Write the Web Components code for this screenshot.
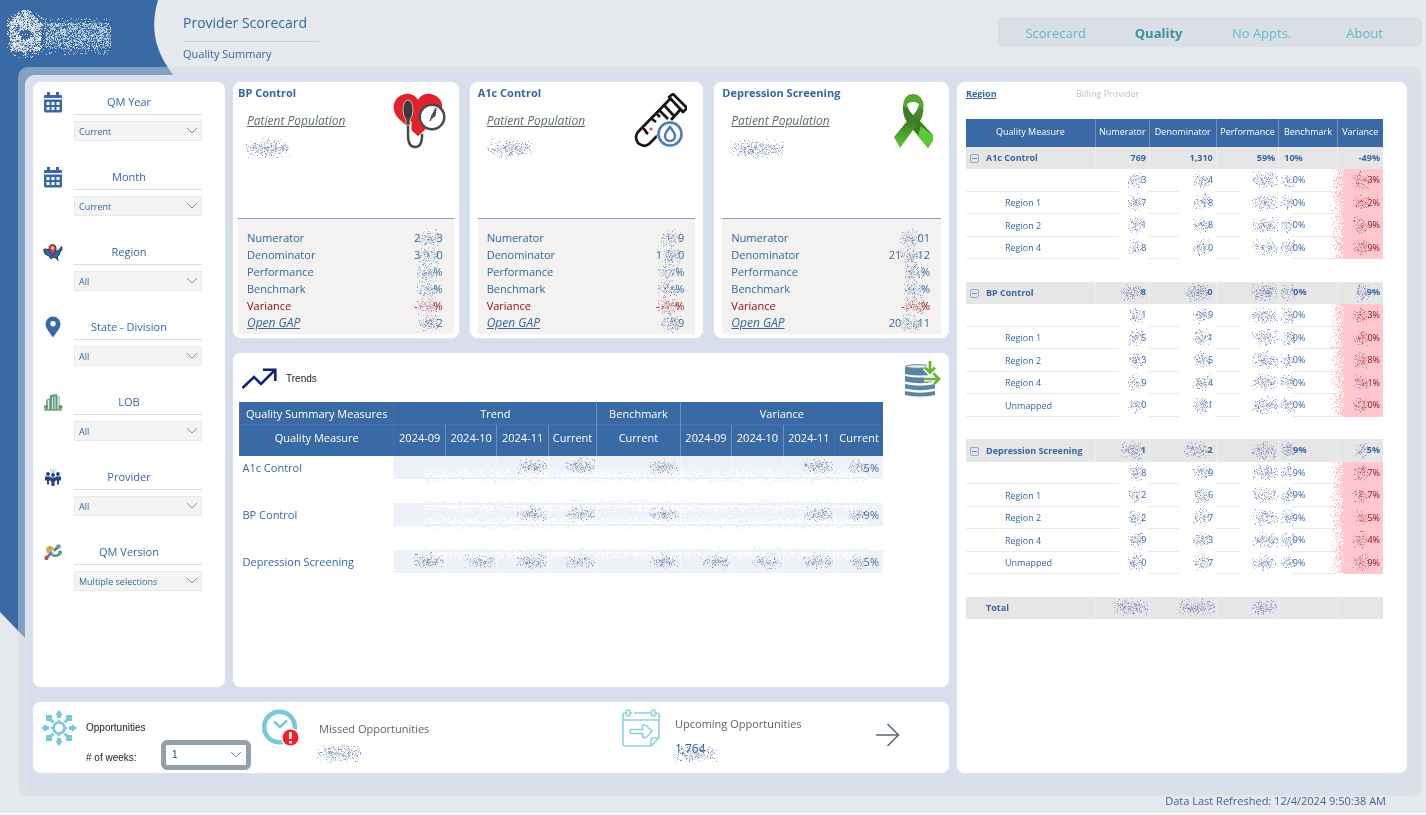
<!DOCTYPE html>
<html lang="en">
<head>
<meta charset="utf-8">
<title>Provider Scorecard</title>
<style>
  body { margin: 0; background: #e6e9ee; font-family: "Open Sans", "Noto Sans", sans-serif; font-size: 11px; color: #3567a5; }
</style>
</head>
<body>
<score-page></score-page>
<script>
/* ---------- helpers ---------- */
function define(name, html, setup) {
  const t = document.createElement('template');
  t.innerHTML = html;
  customElements.define(name, class extends HTMLElement {
    connectedCallback() {
      if (this.shadowRoot) return;
      const root = this.attachShadow({ mode: 'open' });
      root.append(t.content.cloneNode(true));
      if (setup) setup(this, root);
    }
  });
}
function rng(seed) {
  let s = seed * 2654435761 >>> 0 || 1;
  return () => { s ^= s << 13; s >>>= 0; s ^= s >>> 17; s ^= s << 5; s >>>= 0; return s / 4294967296; };
}
let seedCounter = 7;

/* ---------- noise-patch: speckle that hides private values ---------- */
define('noise-patch', `<style>
  :host { display: inline-block; vertical-align: middle; line-height: 0; pointer-events: none; }
  canvas { display: block; }
</style><canvas aria-hidden="true"></canvas>`, (el, root) => {
  const w = +el.getAttribute('w') || 20, h = +el.getAttribute('h') || 16;
  const mode = el.getAttribute('mode') || 'value';
  const c = root.querySelector('canvas');
  c.width = w; c.height = h;
  const g = c.getContext('2d'), r = rng(seedCounter += 13);
  for (let i = 0; i < 8; i++) r();
  const sets = {
    value: ['57,100,165', '110,140,190', '57,80,140', '190,170,190', '150,180,220'],
    red: ['150,20,40', '190,90,100', '160,110,160', '220,120,110'],
    purple: ['57,100,165', '90,90,160', '150,150,200', '190,170,190']
  };
  const dot = (x, y, col, a) => { g.fillStyle = 'rgba(' + col + ',' + a + ')'; g.fillRect(x, y, 1, 1); };
  for (let y = 0; y < h; y++) for (let x = 0; x < w; x++) {
    const v = r();
    if (mode === 'logo') {
      const dx = x - 18, dy = y - 26, d = Math.hypot(dx, dy);
      const roof = y > 1 && y < 18 && Math.abs(dx) < y * 0.95 + 2;
      const body = y >= 14 && y < 43 && Math.abs(dx) < 16;
      let p = (body && d > 6) || roof ? 0.74 : d < 24 ? 0.2 : 0;
      if (d < 5) p = 0.12;
      if (x > 37 && x < w - 4) p = Math.max(p, y > 14 && y < 31 ? 0.6 : y > 30 && y < 41 ? 0.5 : y > 9 && y < 47 ? 0.12 : 0);
      if (v < p) dot(x, y, '255,255,255', x > 37 ? 0.35 + r() * 0.45 : 0.5 + r() * 0.5);
    } else if (mode === 'fringe') {
      const e = Math.min(y, h - 1 - y);
      if (e < 9) { if (v < e / 9 * 0.85 + 0.03) dot(x, y, '255,255,255', 0.85); }
      else if (v < (15 - e) / 6 * 0.45) dot(x, y, '232,238,246', 0.9);
    } else if (mode === 'edge') {
      if (v < Math.pow(x / w, 1.2)) dot(x, y, '255,199,206', 1);
    } else {
      const nx = (x - w / 2) / (w / 2), ny = (y - h / 2) / (h / 2);
      const p = 0.8 * Math.exp(-(nx * nx + ny * ny * 2)) - 0.06;
      const s = sets[mode];
      if (v < p) dot(x, y, s[Math.floor(r() * s.length)], 0.2 + r() * 0.55);
    }
  }
});

/* expands "2~3" into visible digits around a speckled patch */
function masked(text, mode, w, h) {
  return text.replace('~', `<noise-patch w="${w}" h="${h || 16}" mode="${mode}"></noise-patch>`);
}

/* ---------- icons ---------- */
const ICONS = {
  calendar: `<svg viewBox="0 0 20 22"><path fill="#3968a6" d="M4 1h3v3h6V1h3v3h2q1 0 1 1v2H1V5q0-1 1-1h2zM1 8.500h18V20q0 1.500-1.500 1.500h-15Q1 21.500 1 20z"/><path fill="#fff" d="M3.500 11h3v3h-3zm5 0h3v3h-3zm5 0h3v3h-3zm-10 5h3v3h-3zm5 0h3v3h-3zm5 0h3v3h-3z"/></svg>`,
  region: `<svg viewBox="0 0 20 22"><path d="M1 8l5 .5 4 .5 4 1 2-1 2.500-3.500.5 3-1.500 2-1.500 3.500-2 2 1 3.500-2-2.500-3-1-2 2-2-3-4-2-1-3z" fill="#2f66ab" stroke="#23324a" stroke-width="1"/><path d="M9.500 14.500C7.500 11.500 6 10 6 7a3.500 3.500 0 017 0C13 10 11.500 11.500 9.500 14.500z" fill="#e0404b" stroke="#3b2430" stroke-width=".8"/><circle cx="9.500" cy="7" r="1.500" fill="#f6d5d5"/></svg>`,
  pin: `<svg viewBox="0 0 20 22"><path fill="#3968a6" fill-rule="evenodd" d="M10 21.500C7 16.500 2.500 12.500 2.500 8a7.500 7.500 0 0115 0c0 4.500-4.500 8.500-7.500 13.500zM10 5a2.700 2.700 0 100 5.400A2.700 2.700 0 0010 5z"/></svg>`,
  building: `<svg viewBox="0 0 20 22"><path fill="#7fae9b" d="M3 9l5-3v13H3z"/><path fill="#5d9c93" d="M7 4l7-1v16H7z"/><path fill="#9cc3b4" d="M14 4l3 2v13h-3z"/><path d="M9.500 6v12M12 5.500V18M5.500 9v9M15.500 7v10" stroke="#dcefe6" stroke-width="1"/><circle cx="3" cy="16" r="2" fill="#5f9a62"/><circle cx="17.500" cy="16" r="2" fill="#5f9a62"/><path d="M1 19h18" stroke="#7aa377" stroke-width="1.500"/></svg>`,
  people: `<svg viewBox="0 0 20 22"><g fill="#26417f"><circle cx="5" cy="8" r="1.900"/><circle cx="15" cy="8" r="1.900"/><circle cx="10" cy="9" r="1.900"/><path d="M2 10.500h5.500v4H6v4H4v-4H2zM12.500 10.500H18v4h-2v4h-2v-4h-1.500zM7.500 11.500h5v4h-1V20h-3v-4.500h-1z"/></g><path d="M7 4h1.500m1 0h1.500m1 0h1.500M8.500 6h3" stroke="#8ec9ec" stroke-width="1.300"/></svg>`,
  version: `<svg viewBox="0 0 20 22"><path d="M3 8q2-4 5-3l3 2-4 5H4z" fill="#d5a84c"/><path d="M9 14q4 2 8-1" stroke="#3fa277" stroke-width="2.500" fill="none"/><path d="M4 16L15 6" stroke="#5b7d9d" stroke-width="3"/><circle cx="15.500" cy="5.500" r="2.300" fill="#7595ae"/><circle cx="17" cy="11.500" r="2" fill="#3fa277"/><circle cx="3.500" cy="17" r="2.200" fill="#b65a4c"/><circle cx="10" cy="10.500" r="1.500" fill="#e9eef2"/></svg>`,
  heart: `<svg viewBox="0 0 54 56"><path fill="#e3202b" d="M26 43L7 26C-3 16 2 3 13 1c6-1 11 2 13 6 2-4 7-7 13-6 10 2 15 12 8 23z"/><path d="M17 28v14q0 11 7 11t7-11" fill="none" stroke="#fff" stroke-width="5"/><path d="M16 25v17q0 12 7 12t7-11v-2" fill="none" stroke="#4a4a4a" stroke-width="2.500"/><path d="M11 17q0-9 5-10 5 1 5 10 0 6-3 10v5h-4v-5q-3-4-3-10z" fill="#3b3b3b" stroke="#c8b8b8" stroke-width="1"/><circle cx="40" cy="24" r="12.300" fill="#fff" stroke="#4a4a4a" stroke-width="2.500"/><path d="M38 28l2-6 4-7-1 8-4 3z" fill="#555" stroke="#444" stroke-width="1"/></svg>`,
  tube: `<svg viewBox="0 0 54 56"><g fill="none" stroke="#141414" stroke-width="2.700" stroke-linejoin="round"><path d="M36 4l4-3 14 14-4 4z"/><path d="M37 6L5 39q-4 5 0 11 6 5 11 1l12-12M47 17l-9 10M31 12l10 11M26 17l9 9"/><path d="M24 21l3 3m-8 2l4 3m-13 7q2 0 3 3l2 2"/></g><circle cx="18" cy="36" r="1.500" fill="#ee4050"/><circle cx="37" cy="41" r="13.500" fill="#fff"/><circle cx="37" cy="41" r="11.500" fill="#fff" stroke="#4a7ab8" stroke-width="2.500"/><path d="M37 34q-5 6-5 9a5 5 0 0010 0q0-3-5-9z" fill="none" stroke="#4a7ab8" stroke-width="2.500"/></svg>`,
  ribbon: `<svg viewBox="-7 0 54 56"><defs><linearGradient id="ga" x1="0" y1="0" x2="0" y2="1"><stop offset="0" stop-color="#4d9a2c"/><stop offset=".4" stop-color="#3f7d22"/><stop offset="1" stop-color="#5cc838"/></linearGradient></defs><path fill="#3f7a24" d="M17 13Q16 24 24 33L42 55l7-11L32 26Q26 19 27 10z"/><path fill="url(#ga)" d="M37 13Q39 24 30 33L14 55 8 44 22 27Q30 18 29 10z"/><path fill="#54aa33" d="M17 13Q18 1 27 1t11 12l-5 2q-1-6-6-6t-6 6z"/><path fill="#fff" d="M21 11q6-4 12 0-1 6-6 11-5-5-6-11z"/><path fill="#5cc838" d="M35 33l14 11-7 11-10-12z"/></svg>`,
  trend: `<svg viewBox="0 0 36 22"><path d="M1.500 20L13 9l7 7L33 3" fill="none" stroke="#10237a" stroke-width="2.600"/><path d="M22 1.700h12.300V13" fill="none" stroke="#10237a" stroke-width="2.600"/></svg>`,
  database: `<svg viewBox="0 0 38 38"><g fill="#5b86a0"><path d="M1 7h30v7Q16 17 1 14z"/><path d="M1 16q15 3 30 0v5.500Q16 25 1 21.500z"/><path d="M1 24q15 3.500 30 0v4.500q-15 3.500-30 0z"/><path d="M1 31q15 3.500 30 0v4q-15 3-30 0z"/></g><ellipse cx="14" cy="6.500" rx="12.500" ry="1.800" fill="#e9eff2" stroke="#5b86a0"/><path d="M26 1v10m-5-3.500l5 5 5-5" stroke="#fff" stroke-width="5.500" fill="none"/><path d="M20 19h14m-4.500-4.500L35 19l-5.500 4.500" stroke="#fff" stroke-width="5" fill="none"/><path d="M26 1v11m-5-4.500l5 5 5-5M20 19h15m-5-5l5 5-5 5" stroke="#6ab52d" stroke-width="2.700" fill="none"/></svg>`,
  hub: `<svg viewBox="0 0 36 38"><g fill="#79c9db"><path d="M18 1l4 5h-2v3h-4V6h-2zM18 37l4-5h-2v-3h-4v3h-2zM0 19l5-4v2h3v4H5v2zM36 19l-5-4v2h-3v4h3v2z"/><path d="M5 6h6v4l2.500 2.500-2 2L9 12H5zM31 6h-6v4l-2.500 2.500 2 2L27 12h4zM5 32h6v-4l2.500-2.500-2-2L9 26H5zM31 32h-6v-4l-2.500-2.500 2-2L27 26h4z"/><path d="M17 10.500h2v3h-2zM17 24.500h2v3h-2zM9.500 18h3v2h-3zM23.500 18h3v2h-3z"/></g><circle cx="18" cy="19" r="5.500" fill="#fff" stroke="#79c9db" stroke-width="2.600"/></svg>`,
  clock: `<svg viewBox="0 0 38 38"><circle cx="17.500" cy="18" r="15.300" fill="#fff" stroke="#79c9db" stroke-width="4.600"/><path d="M12 12.500l6 5.500 7-6.500" fill="none" stroke="#79c9db" stroke-width="2.600"/><circle cx="28.500" cy="28.500" r="9.500" fill="#fff"/><circle cx="28.500" cy="28.500" r="8" fill="#ee2229"/><path d="M28.500 23v7m0 2v2.500" stroke="#fff" stroke-width="2.600"/></svg>`,
  schedule: `<svg viewBox="0 0 38 38"><g fill="none" stroke="#8fd0df" stroke-width="1.600"><path d="M4 4H3Q1 4 1 6v29q0 2 2 2h26l8-8V6q0-2-2-2h-1M8 4h2m2 0h17M1 11h36M29 37v-6q0-2 2-2h6"/><rect x="4.500" y="1" width="3.500" height="6" rx="1.500"/><rect x="29.500" y="1" width="3.500" height="6" rx="1.500"/><path d="M9 20.500h12q-2-4 1-5 2 0 8 7-6 7-8 6-3-1-1-4H9q-2-2 0-4z" stroke-linejoin="round"/></g></svg>`,
  arrow: `<svg viewBox="0 0 26 26"><path d="M1 13h23M12.500 2l11 11-11 11" fill="none" stroke="#5b6b6b" stroke-width="1.600"/></svg>`
};
define('app-icon', `<style>:host { display: block; flex: none; } svg { display: block; width: 100%; height: 100%; }</style>`,
  (el, root) => root.append(Object.assign(document.createElement('template'), { innerHTML: ICONS[el.getAttribute('name')] }).content));

const SELECT_CSS = `
  .pick { display: grid; align-items: center; }
  .pick > * { grid-area: 1 / 1; }
  .pick svg { justify-self: end; margin-right: 4px; width: 12px; height: 8px; pointer-events: none; }
  select { appearance: none; box-sizing: border-box; width: 100%; height: 20px; margin: 0; padding: 0 20px 0 4px; font: inherit; color: inherit; border-radius: 0; }
`;
const CHEVRON = `<svg viewBox="0 0 12 8" aria-hidden="true"><path d="M1 1l5 5 5-5" fill="none" stroke="#7593b8" stroke-width="1"/></svg>`;

/* ---------- panel ---------- */
define('white-panel', `<style>
  :host { display: block; background: #fff; border-radius: 8px; box-shadow: 0 0 2px #e9edf5; min-width: 0; }
</style><slot></slot>`);

/* ---------- header ---------- */
define('page-header', `<style>
  :host { display: flex; align-items: flex-start; height: 67px; }
  .logo { width: 183px; flex: none; padding: 8px 0 0 7px; box-sizing: border-box; }
  .titles { width: 136px; }
  h1 { margin: 0; font-size: 14px; line-height: 20px; font-weight: 400; padding: 13px 0 8px; border-bottom: 1px solid #cbd3d6; white-space: nowrap; }
  h2 { margin: 0; font-size: 11px; line-height: 16px; font-weight: 400; padding-top: 4px; }
  nav { display: grid; grid-template-columns: repeat(4, 1fr); width: calc(30% - 4px); min-width: 360px; box-sizing: border-box; margin: 17px 4px 0 auto; padding: 0 6px; background: #d9e0e5; border-radius: 6px; text-align: center; font-size: 13px; line-height: 32px; height: 30px; }
  a { color: #62b8cc; text-decoration: none; }
  a[aria-current] { color: #3f8f9f; font-weight: 700; }
</style>
<div class="logo"><noise-patch mode="logo" w="108" h="50"></noise-patch></div>
<div class="titles"><h1>Provider Scorecard</h1><h2>Quality Summary</h2></div>
<nav><a href="#scorecard">Scorecard</a><a href="#quality" aria-current="page">Quality</a><a href="#appts">No Appts.</a><a href="#about">About</a></nav>`);

/* ---------- sidebar ---------- */
define('filter-field', `<style>
  :host { display: grid; grid-template-columns: 20px 128px; column-gap: 11px; height: 75px; align-content: start; }
  app-icon { width: 20px; height: 22px; margin-top: 1px; }
  label { font-size: 11px; line-height: 24px; text-align: center; padding-right: 18px; border-bottom: 1px solid #dcdfe0; }
  .pick { grid-column: 2; margin-top: 6px; font-size: 9px; }
  select { background: #f4f4f4; border: 1px solid #e9e9e9; }
  ${SELECT_CSS}
</style>
<label for="s"></label>
<div class="pick"><select id="s"><option></option></select>${CHEVRON}</div>`, (el, root) => {
  const label = root.querySelector('label');
  label.insertAdjacentHTML('beforebegin', `<app-icon name="${el.getAttribute('icon')}"></app-icon>`);
  label.textContent = el.getAttribute('label');
  root.querySelector('option').textContent = el.getAttribute('value');
});
define('filter-sidebar', `<style>
  :host { display: block; }
  white-panel { height: 100%; box-sizing: border-box; padding: 8px 0 0 10px; }
</style>
<white-panel>
  <filter-field icon="calendar" label="QM Year" value="Current"></filter-field>
  <filter-field icon="calendar" label="Month" value="Current"></filter-field>
  <filter-field icon="region" label="Region" value="All"></filter-field>
  <filter-field icon="pin" label="State - Division" value="All"></filter-field>
  <filter-field icon="building" label="LOB" value="All"></filter-field>
  <filter-field icon="people" label="Provider" value="All"></filter-field>
  <filter-field icon="version" label="QM Version" value="Multiple selections"></filter-field>
</white-panel>`);

/* ---------- measure card ---------- */
const MEASURES = {
  bp: { title: 'BP Control', icon: 'heart', pop: 44, rows: ['2~3', '3~0', '~%', '~%', '-~%', '~2'] },
  a1c: { title: 'A1c Control', icon: 'tube', pop: 46, rows: ['~9', '1~0', '~%', '~%', '-~%', '~9'] },
  dep: { title: 'Depression Screening', icon: 'ribbon', pop: 54, rows: ['~01', '21~12', '~%', '~%', '-~%', '20~11'] }
};
define('measure-card', `<style>
  :host { display: block; min-width: 0; --side: 8px; }
  :host([kind="bp"]) { --side: 5px; }
  white-panel { height: 100%; box-sizing: border-box; padding: 2px var(--side) 4px; display: grid; grid-template-rows: 135px 1fr; }
  .top { display: grid; grid-template-columns: 1fr 54px; border-bottom: 1px solid #7f9fc8; padding-right: 8px; }
  h3 { margin: 0; font-size: 11px; line-height: 18px; font-weight: 700; white-space: nowrap; }
  .pop { display: block; font-size: 12px; line-height: 18px; font-style: italic; color: #5f6b6b; margin: 10px 0 0 9px; }
  .hidden { display: block; margin: 8px 0 0 8px; }
  app-icon { width: 54px; height: 56px; margin-top: 9px; }
  dl { margin: 0; background: #f3f2f1; padding: 10px 11px 0 9px; display: grid; grid-template-columns: 1fr auto; grid-auto-rows: 17px; line-height: 17px; font-size: 11px; }
  dt, dd { margin: 0; } dd { text-align: right; white-space: nowrap; }
  dd noise-patch { margin: -2px -3px 0 -1px; }
  .var { color: #8f0a16; }
  dt a { color: inherit; font-style: italic; font-size: 12px; }
</style>
<white-panel><div class="top"><div><h3></h3><a class="pop" href="#population">Patient Population</a><span class="hidden"></span></div></div><dl></dl></white-panel>`, (el, root) => {
  const m = MEASURES[el.getAttribute('kind')];
  root.querySelector('h3').textContent = m.title;
  root.querySelector('.hidden').innerHTML = masked('~', 'value', m.pop, 20);
  root.querySelector('.top').insertAdjacentHTML('beforeend', `<app-icon name="${m.icon}"></app-icon>`);
  const names = ['Numerator', 'Denominator', 'Performance', 'Benchmark', 'Variance', '<a href="#gap">Open GAP</a>'];
  root.querySelector('dl').innerHTML = names.map((n, i) => {
    const cls = i === 4 ? ' class="var"' : '';
    return `<dt${cls}>${n}</dt><dd${cls}>${masked(m.rows[i], i === 4 ? 'red' : 'value', 20, 20)}</dd>`;
  }).join('');
});

/* ---------- trends ---------- */
define('trends-panel', `<style>
  :host { display: block; min-width: 0; }
  white-panel { height: 100%; box-sizing: border-box; padding: 0 66px 0 6px; }
  header { display: flex; height: 49px; align-items: flex-start; margin-right: -59px; }
  header app-icon { width: 36px; height: 22px; margin: 15px 0 0 2px; }
  header span { font: 10px/16px "Liberation Sans", Arial, sans-serif; color: #222; margin: 18px auto 0 9px; }
  button { padding: 0; border: 0; background: none; margin-top: 7px; }
  button app-icon { width: 38px; height: 38px; margin: 0; }
  table { width: 100%; border-collapse: collapse; table-layout: fixed; font-size: 11px; }
  th { background: #396aa6; color: #fff; font-weight: 400; padding: 0; white-space: nowrap; border-left: 1px solid #6f93c1; }
  th.soft, tr > th:first-child { border-left-color: #4471ab; }
  thead tr:first-child th { height: 22px; }
  thead tr + tr th { height: 25px; padding-bottom: 6px; border-top: 1px solid #4774ad; }
  tbody th { background: none; color: inherit; text-align: left; padding-left: 3px; border: 0; }
  tbody tr { height: 23px; }
  tbody td { padding: 0 4px 0 0; text-align: right; background: #eef2f8; white-space: nowrap; border-left: 1px solid #f4f7fa; }
  tbody td noise-patch { margin: -4px -3px 0 0; }
  .gap { height: 24px; }
  .gap td { background: none; border: 0; padding: 0; position: relative; }
  .gap noise-patch { position: absolute; left: 30px; top: -11px; margin: 0; }
</style>
<white-panel>
  <header><app-icon name="trend"></app-icon><span>Trends</span><button aria-label="Export data"><app-icon name="database"></app-icon></button></header>
  <table>
    <colgroup><col style="width:24%"><col style="width:8%"><col style="width:8%"><col style="width:8%"><col style="width:7.500%"><col style="width:13%"><col style="width:8%"><col style="width:8%"><col style="width:8%"><col style="width:7.500%"></colgroup>
    <thead>
      <tr><th>Quality Summary Measures</th><th colspan="4" class="soft">Trend</th><th>Benchmark</th><th colspan="4">Variance</th></tr>
      <tr><th>Quality Measure</th><th class="soft">2024-09</th><th>2024-10</th><th>2024-11</th><th>Current</th><th>Current</th><th>2024-09</th><th>2024-10</th><th>2024-11</th><th class="soft">Current</th></tr>
    </thead>
    <tbody></tbody>
  </table>
</white-panel>`, (el, root) => {
  const rows = [
    ['A1c Control', '', '', '~', '~', '~', '', '', '~', '~5%'],
    ['BP Control', '', '', '~', '~', '~', '', '', '~', '~9%'],
    ['Depression Screening', '~', '~', '~', '~', '~', '~', '~', '~', '~5%']
  ];
  root.querySelector('tbody').innerHTML = rows.map((r, n) =>
    `<tr><th scope="row">${r[0]}</th>${r.slice(1).map((v, i) => `<td>${masked(v, 'value', i === 8 ? 18 : 30, 17)}</td>`).join('')}</tr>` +
    (n < 2 ? `<tr class="gap"><td></td><td colspan="9"><noise-patch mode="fringe" w="444" h="46"></noise-patch></td></tr>` : '')
  ).join('');
});

/* ---------- region breakdown ---------- */
define('region-table', `<style>
  :host { display: block; min-width: 0; font-size: 9px; }
  white-panel { height: 100%; box-sizing: border-box; padding: 4px 24px 0 9px; }
  .tabs { display: flex; height: 33px; line-height: 16px; }
  .tabs a { width: 110px; color: #bfc4c8; text-decoration: none; }
  .tabs a[aria-current] { color: #3567a5; font-weight: 700; text-decoration: underline; }
  table { width: 100%; border-collapse: collapse; table-layout: fixed; }
  thead th { background: #396aa6; color: #fff; font-weight: 400; height: 24px; padding: 0 0 4px; white-space: nowrap; border-left: 1px solid #6f93c1; }
  thead th:first-child { border-left: 0; }
  tbody tr { height: 22px; }
  tbody tr:nth-child(even) { height: 23px; }
  td, tbody th { padding: 0 3px 0 0; text-align: right; white-space: nowrap; line-height: 16px; }
  tbody th { text-align: left; font-weight: 400; padding-left: 39px; }
  td:nth-child(5) { text-align: left; padding-left: 5px; }
  .child th, .child td { background: linear-gradient(#e8e9ea, #e8e9ea) left bottom / 100% 1px no-repeat; }
  .child td:nth-child(2), .child td:nth-child(3) { background-size: 45% 1px; }
  .child td:nth-child(4) { background-size: 40% 1px; }
  .child td:nth-child(5) { background-position: right bottom; background-size: 78% 1px; }
  .child td:nth-child(6) { position: relative; color: #8f0a16; background: linear-gradient(90deg, transparent 7px, #ffc7ce 7px); }
  .edge { position: absolute; left: -8px; top: 0; height: 100%; overflow: hidden; }
  td > noise-patch { margin: -2px -2px 0 0; }
  td:nth-child(5) > noise-patch { margin-left: -3px; }
  .group th, .group td { background: #e6e6e6; font-weight: 700; border-left: 1px solid #eeeeee; }
  .group th { padding-left: 4px; border: 0; }
  .group button { width: 9px; height: 9px; padding: 0; margin: 0 7px 0 0; border: 1px solid #8fabcd; border-radius: 2px; background: #dfe6ee; vertical-align: middle; display: inline-flex; align-items: center; justify-content: center; }
  .group i { display: block; width: 5px; height: 1px; background: #6f93c1; }
  .total th { padding-left: 20px; }
</style>
<white-panel>
  <div class="tabs"><a href="#region" aria-current="true">Region</a><a href="#billing">Billing Provider</a></div>
  <table>
    <colgroup><col style="width:31%"><col style="width:13%"><col style="width:16%"><col style="width:15%"><col style="width:14%"><col style="width:11%"></colgroup>
    <thead><tr><th>Quality Measure</th><th>Numerator</th><th>Denominator</th><th>Performance</th><th>Benchmark</th><th>Variance</th></tr></thead>
    <tbody></tbody>
  </table>
</white-panel>`, (el, root) => {
  const groups = [
    ['A1c Control', ['769', '1,310', '59%', '10%', '-49%'], [
      ['', '3', '4', '0%', '3%'], ['Region 1', '7', '8', '0%', '2%'], ['Region 2', '1', '8', '0%', '9%'], ['Region 4', '8', '0', '0%', '9%']]],
    ['BP Control', ['~8', '~0', '~', '~0%', '~9%'], [
      ['', '1', '9', '0%', '3%'], ['Region 1', '5', '1', '0%', '0%'], ['Region 2', '3', '5', '0%', '8%'], ['Region 4', '9', '4', '0%', '1%'], ['Unmapped', '0', '1', '0%', '0%']]],
    ['Depression Screening', ['~1', '~2', '~', '~9%', '~5%'], [
      ['', '8', '9', '9%', '7%'], ['Region 1', '2', '6', '9%', '7%'], ['Region 2', '2', '7', '9%', '5%'], ['Region 4', '9', '3', '9%', '4%'], ['Unmapped', '0', '7', '9%', '9%']]]
  ];
  let html = '';
  for (const [name, tot, kids] of groups) {
    html += `<tr class="group"><th scope="row"><button aria-label="Collapse ${name}"><i></i></button>${name}</th>` +
      tot.map((v, i) => `<td>${masked(v, 'purple', [22, 26, 26, 14, 14][i], 20)}</td>`).join('') + '</tr>';
    for (const k of kids) {
      html += `<tr class="child"><th scope="row">${k[0]}</th><td>${masked('~' + k[1], 'value', 15, 18)}</td><td>${masked('~' + k[2], 'value', 17, 18)}</td>` +
        `<td>${masked('~', 'value', 26, 18)}</td><td>${masked('~' + k[3], 'value', 14, 18)}</td>` +
        `<td><span class="edge"><noise-patch mode="edge" w="16" h="23"></noise-patch></span>${masked('~' + k[4], 'red', 16, 18)}</td></tr>`;
    }
    html += '<tr><td colspan="6"></td></tr>';
  }
  html += `<tr class="group total"><th scope="row">Total</th>${[34, 38, 26].map(w => `<td>${masked('~', 'purple', w, 18)}</td>`).join('')}<td></td><td></td></tr>`;
  root.querySelector('tbody').innerHTML = html;
});

/* ---------- opportunities ---------- */
define('opportunity-bar', `<style>
  :host { display: block; }
  white-panel { display: grid; grid-template-columns: 221fr 360fr 253fr 74fr; padding: 7px 0 3px 8px; }
  .weeks { display: grid; grid-template-columns: 45px 75px 90px; grid-template-rows: 31px 30px; font: 10px/16px "Liberation Sans", Arial, sans-serif; color: #222; }
  .weeks app-icon { grid-row: span 2; width: 36px; height: 38px; }
  .weeks span { grid-column: 2 / 4; padding-top: 11px; }
  .weeks label { padding-top: 10px; }
  .pick { box-sizing: border-box; height: 30px; border: 5px solid #94a1ab; border-radius: 6px; background: #fff; color: #22427a; }
  ${SELECT_CSS}
  select { border: 0; background: transparent; padding-left: 6px; }
  .stat { display: flex; color: #5f6666; font-size: 11px; line-height: 16px; }
  .stat app-icon { width: 38px; height: 38px; }
  .stat p { margin: 0; }
  .missed div { margin: 12px 0 0 19px; } .missed noise-patch { margin: 6px 0 0 -2px; }
  .upcoming div { margin: 7px 0 0 15px; }
  .num { position: relative; color: #2c5ea5; font-size: 12px; padding-top: 8px; line-height: 18px; }
  .num noise-patch { position: absolute; left: -2px; top: 12px; }
  .next { align-self: start; justify-self: start; padding: 0; margin: 13px 0 0; border: 0; background: none; }
  .next app-icon { width: 26px; height: 26px; }
</style>
<white-panel>
  <div class="weeks"><app-icon name="hub"></app-icon><span>Opportunities</span><label for="w"># of weeks:</label>
    <div class="pick"><select id="w"><option>1</option></select>${CHEVRON}</div></div>
  <div class="stat missed"><app-icon name="clock"></app-icon><div><p>Missed Opportunities</p><noise-patch w="44" h="20"></noise-patch></div></div>
  <div class="stat upcoming"><app-icon name="schedule"></app-icon><div><p>Upcoming Opportunities</p><p class="num">1,764<noise-patch w="44" h="18"></noise-patch></p></div></div>
  <button class="next" aria-label="Next"><app-icon name="arrow"></app-icon></button>
</white-panel>`);

/* ---------- page ---------- */
define('score-page', `<style>
  :host { display: flex; flex-direction: column; min-height: 100vh; position: relative; isolation: isolate; }
  .swoosh { position: absolute; z-index: -1; left: 0; top: 0; width: 180px; height: 640px; }
  main { flex: 1; display: flex; margin: 0 4px 0 18px; padding: 8px 0 0 7px; background: rgba(208,216,220,.49); border-radius: 10px; }
  .inner { flex: 1; min-width: 0; display: grid; grid-template-columns: 916fr 450fr; gap: 8px; padding: 7px 15px 23px 8px; border-radius: 10px; background: #d8deeb; box-shadow: inset 1px 1px 5px #e0e5f1, inset -10px -12px 12px -6px #dbe1e5; }
  .left { display: grid; grid-template-rows: 1fr auto; gap: 15px; min-width: 0; }
  .upper { display: grid; grid-template-columns: 192fr 716fr; gap: 8px; min-width: 0; }
  .center { display: grid; grid-template-rows: 256px 1fr; gap: 15px; min-width: 0; }
  .cards { display: grid; grid-template-columns: 226fr 234fr 235fr; gap: 11px; }
  footer { height: 15px; line-height: 10px; text-align: right; padding-right: 40px; font-size: 11px; border-bottom: 1px solid #d9dbdd; }
  .base { height: 3px; background: #f5f5f5; }
</style>
<svg class="swoosh" viewBox="0 0 180 640" aria-hidden="true"><path fill="#396aa6" d="M0 0H158C151 24 152 48 174 76V100H27V640L0 612Z"/></svg>
<page-header></page-header>
<main><div class="inner">
  <div class="left">
    <div class="upper">
      <filter-sidebar></filter-sidebar>
      <div class="center">
        <div class="cards"><measure-card kind="bp"></measure-card><measure-card kind="a1c"></measure-card><measure-card kind="dep"></measure-card></div>
        <trends-panel></trends-panel>
      </div>
    </div>
    <opportunity-bar></opportunity-bar>
  </div>
  <region-table></region-table>
</div></main>
<footer>Data Last Refreshed: 12/4/2024 9:50:38 AM</footer>
<div class="base"></div>`);
</script>
</body>
</html>
